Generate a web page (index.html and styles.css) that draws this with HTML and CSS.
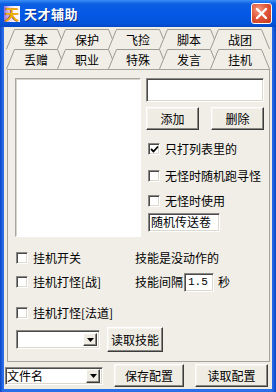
FILE: index.html
```html
<!DOCTYPE html>
<html lang="zh-CN">
<head>
  <meta charset="UTF-8" />
  <title>天才辅助</title>
  <link rel="stylesheet" href="styles.css">
</head>
<body>
  <div class="window">
    <div class="titlebar">
      <span class="app-icon">天</span>
      <span class="title">天才辅助</span>
      <span class="close-btn">
        <svg width="21" height="21" viewBox="0 0 21 21"><path d="M6 6 L15 15 M15 6 L6 15" stroke="#fff" stroke-width="2.4" stroke-linecap="round" /></svg>
      </span>
    </div>

    <div class="client">
      <div class="tab-row">
        <div class="tab"><svg class="tab-shape" viewBox="0 0 60 20"><polyline points="0.5,20 8.5,0.5 51.5,0.5 59.5,20" /></svg><span>基本</span></div>
        <div class="tab"><svg class="tab-shape" viewBox="0 0 60 20"><polyline points="0.5,20 8.5,0.5 51.5,0.5 59.5,20" /></svg><span>保护</span></div>
        <div class="tab"><svg class="tab-shape" viewBox="0 0 60 20"><polyline points="0.5,20 8.5,0.5 51.5,0.5 59.5,20" /></svg><span>飞捡</span></div>
        <div class="tab"><svg class="tab-shape" viewBox="0 0 60 20"><polyline points="0.5,20 8.5,0.5 51.5,0.5 59.5,20" /></svg><span>脚本</span></div>
        <div class="tab"><svg class="tab-shape" viewBox="0 0 60 20"><polyline points="0.5,20 8.5,0.5 51.5,0.5 59.5,20" /></svg><span>战团</span></div>
      </div>
      <div class="tab-row">
        <div class="tab"><svg class="tab-shape" viewBox="0 0 60 20"><polyline points="0.5,20 8.5,0.5 51.5,0.5 59.5,20" /></svg><span>丢赠</span></div>
        <div class="tab"><svg class="tab-shape" viewBox="0 0 60 20"><polyline points="0.5,20 8.5,0.5 51.5,0.5 59.5,20" /></svg><span>职业</span></div>
        <div class="tab"><svg class="tab-shape" viewBox="0 0 60 20"><polyline points="0.5,20 8.5,0.5 51.5,0.5 59.5,20" /></svg><span>特殊</span></div>
        <div class="tab"><svg class="tab-shape" viewBox="0 0 60 20"><polyline points="0.5,20 8.5,0.5 51.5,0.5 59.5,20" /></svg><span>发言</span></div>
        <div class="tab active"><svg class="tab-shape" viewBox="0 0 60 20"><polyline points="0.5,20 8.5,0.5 51.5,0.5 59.5,20" /></svg><span>挂机</span></div>
      </div>

      <div class="panel">
        <div class="top-area">
          <div class="list-box sunken"></div>
          <div class="right-col">
            <div class="edit-top sunken"></div>
            <div class="btn-row">
              <div class="btn btn-small">添加</div>
              <div class="btn btn-small">删除</div>
            </div>
            <div class="check-row first">
              <span class="check sunken"><svg width="9" height="9" viewBox="0 0 9 9"><polyline points="1,4 3.5,6.5 8,1.5" fill="none" stroke="#000" stroke-width="1.8" /></svg></span>
              <span>只打列表里的</span>
            </div>
            <div class="check-row second">
              <span class="check sunken"></span>
              <span>无怪时随机跑寻怪</span>
            </div>
            <div class="check-row third">
              <span class="check sunken"></span>
              <span>无怪时使用</span>
            </div>
            <div class="edit-scroll sunken">随机传送卷</div>
          </div>
        </div>

        <div class="lower">
          <div class="lower-row row-a">
            <div class="left-cell check-row"><span class="check sunken"></span><span>挂机开关</span></div>
            <div class="right-cell">技能是没动作的</div>
          </div>
          <div class="lower-row row-b">
            <div class="left-cell check-row"><span class="check sunken"></span><span>挂机打怪[战]</span></div>
            <div class="right-cell">
              <span>技能间隔</span>
              <span class="edit-num sunken">1.5</span>
              <span class="unit">秒</span>
            </div>
          </div>
          <div class="lower-row row-c">
            <div class="left-cell check-row"><span class="check sunken"></span><span>挂机打怪[法道]</span></div>
          </div>
          <div class="lower-row row-d">
            <div class="combo combo-skill sunken">
              <span class="combo-text"></span>
              <span class="drop-btn"><svg width="7" height="4" viewBox="0 0 7 4"><polygon points="0,0 7,0 3.5,4" fill="#000" /></svg></span>
            </div>
            <div class="btn btn-skill">读取技能</div>
          </div>
        </div>
      </div>

      <div class="bottom-bar">
        <div class="combo combo-file sunken">
          <span class="combo-text">文件名</span>
          <span class="drop-btn"><svg width="7" height="4" viewBox="0 0 7 4"><polygon points="0,0 7,0 3.5,4" fill="#000" /></svg></span>
        </div>
        <div class="btn btn-save">保存配置</div>
        <div class="btn btn-load">读取配置</div>
      </div>
    </div>
  </div>
</body>
</html>
```

FILE: styles.css
```css
* {
    box-sizing: border-box;
}
html, body {
    margin: 0;
    padding: 0;
}
body {
    width: 276px;
    height: 392px;
    overflow: hidden;
    font-family: "Noto Sans CJK SC", "Liberation Sans", sans-serif;
    font-size: 12px;
    line-height: 14px;
    color: #000;
    background: #1458d6;
}
.window {
    width: 276px;
    height: 392px;
    display: flex;
    flex-direction: column;
    background: linear-gradient(90deg, #0a46c8 0, #2a6ee8 3px, #2a6ee8 272px, #0a46c8 276px);
}

/* title bar */
.titlebar {
    height: 27px;
    padding: 0 4px;
    display: flex;
    align-items: center;
    background: linear-gradient(180deg, #3d8ef5 0, #0a5fe3 4px, #0458e6 14px, #0452d8 24px, #0346c4 27px);
}
.app-icon {
    width: 16px;
    height: 16px;
    display: flex;
    align-items: center;
    justify-content: center;
    font-size: 15px;
    font-weight: 700;
    color: #f2b000;
    background: linear-gradient(90deg, #9b70d8 0, #e6dcf6 40%, #fdfbff 70%);
    text-shadow: -1px 0 #7a4cc0;
}
.title {
    margin-left: 4px;
    font-size: 13px;
    font-weight: 700;
    color: #fff;
    letter-spacing: 0.5px;
    text-shadow: 1px 1px #0a2f8f;
}
.close-btn {
    margin-left: auto;
    width: 21px;
    height: 21px;
    display: flex;
    border: 1px solid #fff;
    border-radius: 3px;
    background: radial-gradient(circle at 35% 30%, #f49a80 0, #e1573a 45%, #c2391c 100%);
}
.close-btn svg {
    margin: -1px;
}

/* client area */
.client {
    flex: 1;
    margin: 0 4px 3px;
    padding-top: 2px;
    display: flex;
    flex-direction: column;
    background: #efece4;
}

/* tabs */
.tab-row {
    height: 20px;
    padding-left: 2px;
    display: flex;
}
.tab {
    position: relative;
    width: 60px;
    height: 20px;
    margin-right: -9px;
    display: flex;
    align-items: center;
    justify-content: center;
}
.tab-shape {
    position: absolute;
    top: 0;
    left: 0;
    width: 60px;
    height: 20px;
}
.tab-shape polyline {
    fill: #f1eee7;
    stroke: #9d9b94;
    stroke-width: 1;
}
.tab span {
    position: relative;
    padding-top: 2px;
}

/* panel */
.panel {
    height: 293px;
    margin: 0 2px 0 3px;
    padding: 8px 0 0 7px;
    border: 1px solid #a5a39c;
    background: #f1eee7;
}
.sunken {
    background: #fff;
    border: 1px solid;
    border-color: #8a8884 #fff #fff #8a8884;
    box-shadow: inset 1px 1px #4a4a48, inset -1px -1px #dcd8cc;
}
.btn {
    display: flex;
    align-items: center;
    justify-content: center;
    background: #efece4;
    border: 1px solid;
    border-color: #fff #3c3c3a #3c3c3a #fff;
    box-shadow: inset -1px -1px #8a8884, inset 1px 1px #f6f4ee;
}
.top-area {
    display: flex;
    gap: 5px;
}
.list-box {
    width: 126px;
    height: 159px;
    border-color: #a8a6a0 #fff #fff #a8a6a0;
    box-shadow: inset 1px 1px #d6d3ca;
}
.right-col {
    width: 118px;
    display: flex;
    flex-direction: column;
}
.edit-top {
    height: 24px;
}
.btn-row {
    margin-top: 5px;
    display: flex;
    justify-content: space-between;
}
.btn-small {
    width: 53px;
    height: 23px;
}
.check-row {
    height: 14px;
    display: flex;
    align-items: center;
    gap: 5px;
}
.right-col .check-row {
    margin-left: 2px;
}
.check-row.first {
    margin-top: 12px;
}
.check-row.second {
    margin-top: 13px;
}
.check-row.third {
    margin-top: 11px;
}
.check {
    width: 12px;
    height: 12px;
    flex: none;
    display: flex;
    align-items: center;
    justify-content: center;
}
.check svg {
    margin: 1px 0 0 1px;
}
.edit-scroll {
    width: 72px;
    height: 19px;
    margin: 5px 0 0 2px;
    padding: 1px 0 0 2px;
}

/* lower part */
.lower {
    padding-left: 1px;
}
.lower-row {
    display: flex;
    align-items: center;
}
.left-cell {
    width: 119px;
}
.right-cell {
    display: flex;
    align-items: center;
}
.row-a {
    margin-top: 14px;
    height: 14px;
}
.row-b {
    margin-top: 7px;
    height: 20px;
}
.row-c {
    margin-top: 14px;
    height: 14px;
}
.row-d {
    margin-top: 7px;
    height: 25px;
    gap: 7px;
}
.edit-num {
    width: 30px;
    height: 19px;
    margin-left: 1px;
    padding: 2px 0 0 3px;
    font-family: "Liberation Mono", monospace;
    font-size: 11px;
    line-height: 13px;
}
.unit {
    margin-left: 4px;
}
.combo {
    height: 19px;
    display: flex;
    padding: 2px;
}
.combo-text {
    flex: 1;
    line-height: 14px;
}
.drop-btn {
    width: 14px;
    display: flex;
    align-items: center;
    justify-content: center;
    background: #efece4;
    border: 1px solid;
    border-color: #fff #3c3c3a #3c3c3a #fff;
    box-shadow: inset -1px -1px #8a8884;
}
.combo-skill {
    width: 84px;
}
.btn-skill {
    width: 56px;
    height: 25px;
}

/* bottom bar */
.bottom-bar {
    flex: 1;
    padding-left: 1px;
    display: flex;
    align-items: center;
}
.combo-file {
    width: 98px;
    height: 18px;
    padding: 1px 2px 1px 1px;
}
.btn-save {
    width: 70px;
    height: 23px;
    margin-left: 11px;
}
.btn-load {
    width: 73px;
    height: 23px;
    margin-left: 11px;
}
```
